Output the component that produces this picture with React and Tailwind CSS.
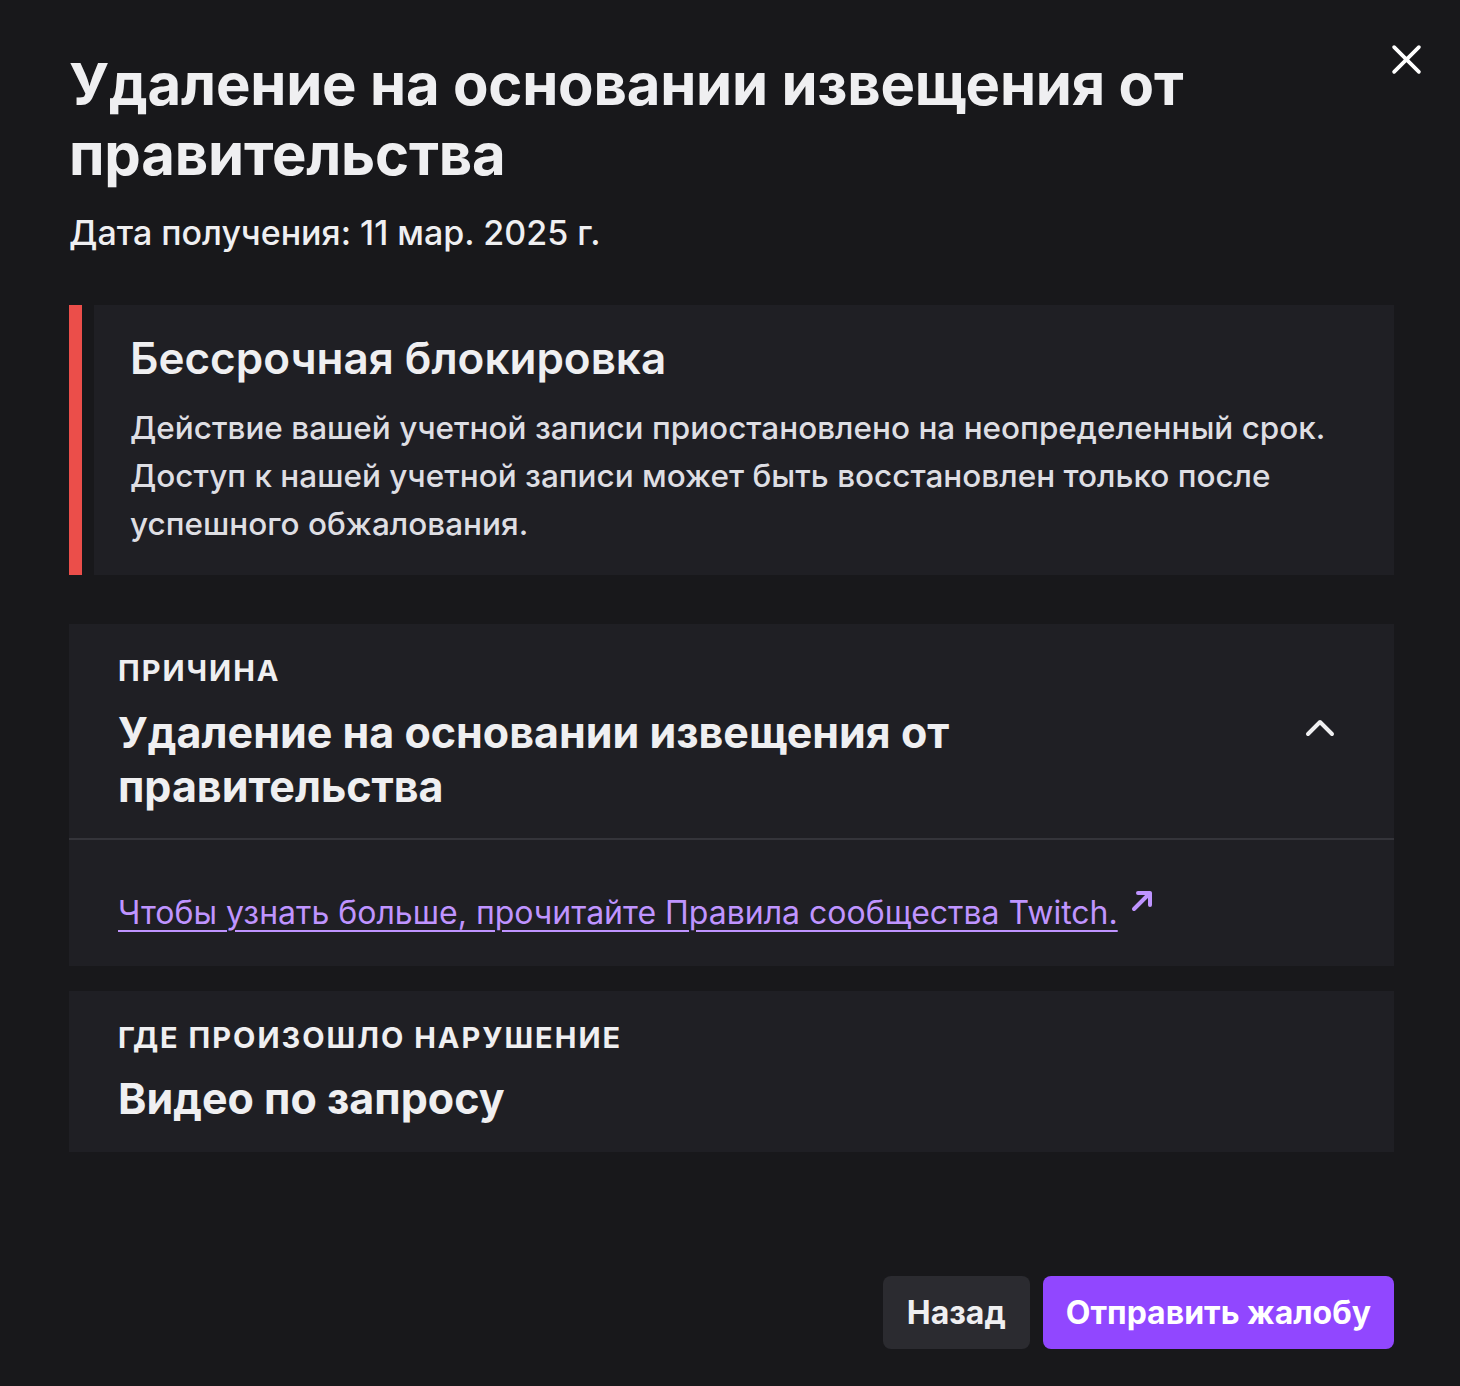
import React from "react";

export default function App() {
  return (
    <div className="w-[1460px] h-[1386px] bg-[#18181b] text-[#efeff1] relative" style={{ fontFamily: "Inter, 'Noto Sans', sans-serif" }}>
      <button className="absolute right-[38px] top-[43px] w-[32px] h-[32px] flex items-center justify-center text-white">
        <svg width="31" height="31" viewBox="0 0 30 30" fill="none" stroke="currentColor" strokeWidth="3.6" strokeLinecap="round">
          <path d="M3 3 L27 27 M27 3 L3 27" />
        </svg>
      </button>
      <div className="pl-[69px] pr-[66px] pt-[49px] flex flex-col">
        <h1 className="text-[58px] leading-[70px] font-bold tracking-[-0.2px] pr-[150px]">
          Удаление на основании извещения от правительства
        </h1>
        <div className="mt-[24px] text-[34px] leading-[40px] font-medium text-[#efeff1]">
          Дата получения: 11 мар. 2025 г.
        </div>

        <div className="mt-[52px] flex gap-[12px] h-[270px]">
          <div className="w-[13px] bg-[#eb4e4a]" />
          <div className="flex-1 bg-[#1f1f24] pl-[36px] pt-[27px]">
            <div className="text-[44px] leading-[52px] font-semibold">
              Бессрочная блокировка
            </div>
            <div className="mt-[20px] text-[31.5px] leading-[48px] font-medium text-[#dedee3] pr-[30px]">
              Действие вашей учетной записи приостановлено на неопределенный срок. Доступ к нашей учетной записи может быть восстановлен только после успешного обжалования.
            </div>
          </div>
        </div>

        <div className="mt-[49px] bg-[#1f1f24] flex flex-col">
          <div className="flex items-start justify-between pl-[49px] pr-[58px] pt-[30px] pb-[25px] border-b-2 border-[#34343a]">
            <div className="flex flex-col">
              <div className="text-[29px] leading-[34px] font-bold uppercase tracking-[2px]">Причина</div>
              <div className="mt-[17px] text-[43px] leading-[54px] font-bold">
                Удаление на основании извещения от<br />правительства
              </div>
            </div>
            <svg className="mt-[63px]" width="32" height="22" viewBox="0 0 32 22" fill="none" stroke="currentColor" strokeWidth="4" strokeLinecap="round" strokeLinejoin="round">
              <path d="M4 17 L16 5 L28 17" />
            </svg>
          </div>
          <div className="pl-[49px] pt-[53px] pb-[33px] flex items-start">
            <a className="text-[32px] leading-[40px] text-[#bf94ff] underline underline-offset-[6px] decoration-2">
              Чтобы узнать больше, прочитайте Правила сообщества Twitch.
            </a>
            <svg className="ml-[10px] mt-[-6px] text-[#bf94ff]" width="28" height="28" viewBox="0 0 28 28" fill="none" stroke="currentColor" strokeWidth="4" strokeLinecap="round" strokeLinejoin="round">
              <path d="M6 22 L22 6 M10 6 L22 6 L22 18" />
            </svg>
          </div>
        </div>

        <div className="mt-[25px] bg-[#1f1f24] pl-[49px] pt-[30px] pb-[28px] flex flex-col">
          <div className="text-[29px] leading-[34px] font-bold uppercase tracking-[2px]">Где произошло нарушение</div>
          <div className="mt-[17px] text-[43px] leading-[52px] font-bold">Видео по запросу</div>
        </div>

        <div className="mt-[124px] flex justify-end gap-[13px]">
          <button className="h-[73px] px-[24px] rounded-[8px] bg-[#2b2b30] text-[32px] font-bold text-[#efeff1]">Назад</button>
          <button className="h-[73px] px-[23px] rounded-[8px] bg-[#9147ff] text-[32px] font-bold text-white">Отправить жалобу</button>
        </div>
      </div>
    </div>
  );
}
